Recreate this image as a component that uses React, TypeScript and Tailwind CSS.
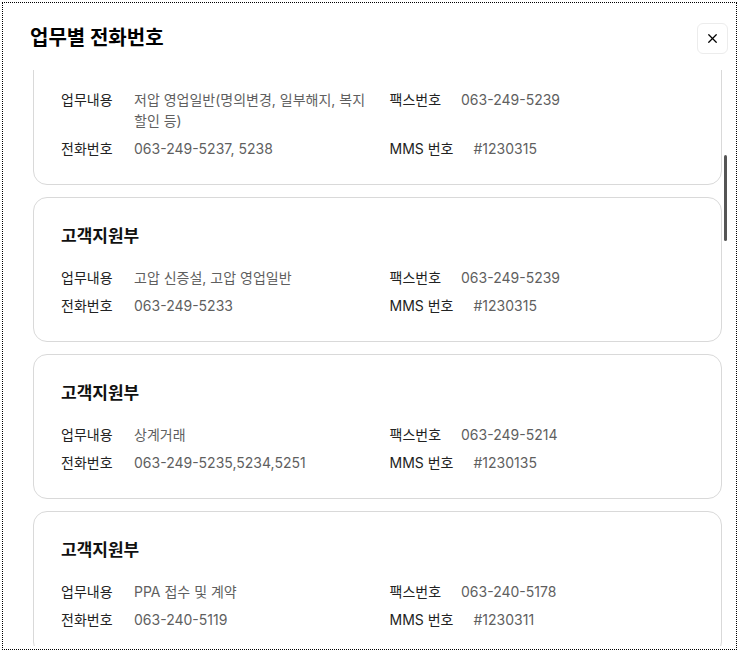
import { X } from "lucide-react";

type Dept = {
  name: string;
  work: string;
  tel: string;
  fax: string;
  mms: string;
};

const depts: Dept[] = [
  {
    name: "고객지원부",
    work: "저압 영업일반(명의변경, 일부해지, 복지 할인 등)",
    tel: "063-249-5237, 5238",
    fax: "063-249-5239",
    mms: "#1230315",
  },
  {
    name: "고객지원부",
    work: "고압 신증설, 고압 영업일반",
    tel: "063-249-5233",
    fax: "063-249-5239",
    mms: "#1230315",
  },
  {
    name: "고객지원부",
    work: "상계거래",
    tel: "063-249-5235,5234,5251",
    fax: "063-249-5214",
    mms: "#1230135",
  },
  {
    name: "고객지원부",
    work: "PPA 접수 및 계약",
    tel: "063-240-5119",
    fax: "063-240-5178",
    mms: "#1230311",
  },
];

const Row = ({ label, value, left }: { label: string; value: string; left?: boolean }) => (
  <div className="flex gap-5 text-[14px] leading-[21px]">
    <span className={left ? "w-[53px] shrink-0 text-[#222]" : "shrink-0 text-[#222]"}>{label}</span>
    <span className="text-[#5f5f5f]">{value}</span>
  </div>
);

const DeptCard = ({ dept }: { dept: Dept }) => (
  <div className="rounded-[14px] border border-[#d9d9d9] bg-white px-[27px] pb-[25px] pt-[26px]">
    <h3 className="text-[17px] font-bold leading-[25px] text-[#111]">{dept.name}</h3>
    <div className="mt-[18px] grid grid-cols-2 gap-x-6 gap-y-[7px]">
      <Row label="업무내용" value={dept.work} left />
      <Row label="팩스번호" value={dept.fax} />
      <Row label="전화번호" value={dept.tel} left />
      <Row label="MMS 번호" value={dept.mms} />
    </div>
  </div>
);

export default function App() {
  return (
    <div
      className="h-[652px] w-[739px] bg-white p-[2px]"
      style={{ fontFamily: 'Inter, "Noto Sans CJK KR", sans-serif' }}
    >
      <div className="relative flex h-full flex-col border border-dotted border-black bg-white">
        {/* header */}
        <div className="flex h-[67px] shrink-0 items-center justify-between pl-[27px] pr-[8px] pt-[3px]">
          <h2 className="text-[20px] font-bold text-black">업무별 전화번호</h2>
          <button className="flex h-[31px] w-[31px] items-center justify-center rounded-md border border-[#ececec] bg-white">
            <X size={15} strokeWidth={2} className="text-black" />
          </button>
        </div>

        {/* list (scrolled) */}
        <div className="mb-[3px] flex-1 overflow-hidden pl-[30px] pr-[14px]">
          <div className="-mt-[51px] flex flex-col gap-3">
            {depts.map((d, i) => (
              <DeptCard key={i} dept={d} />
            ))}
          </div>
        </div>

        {/* scrollbar thumb */}
        <div className="absolute left-[721px] top-[152px] h-[86px] w-[3px] rounded-full bg-[#555]" />
      </div>
    </div>
  );
}
